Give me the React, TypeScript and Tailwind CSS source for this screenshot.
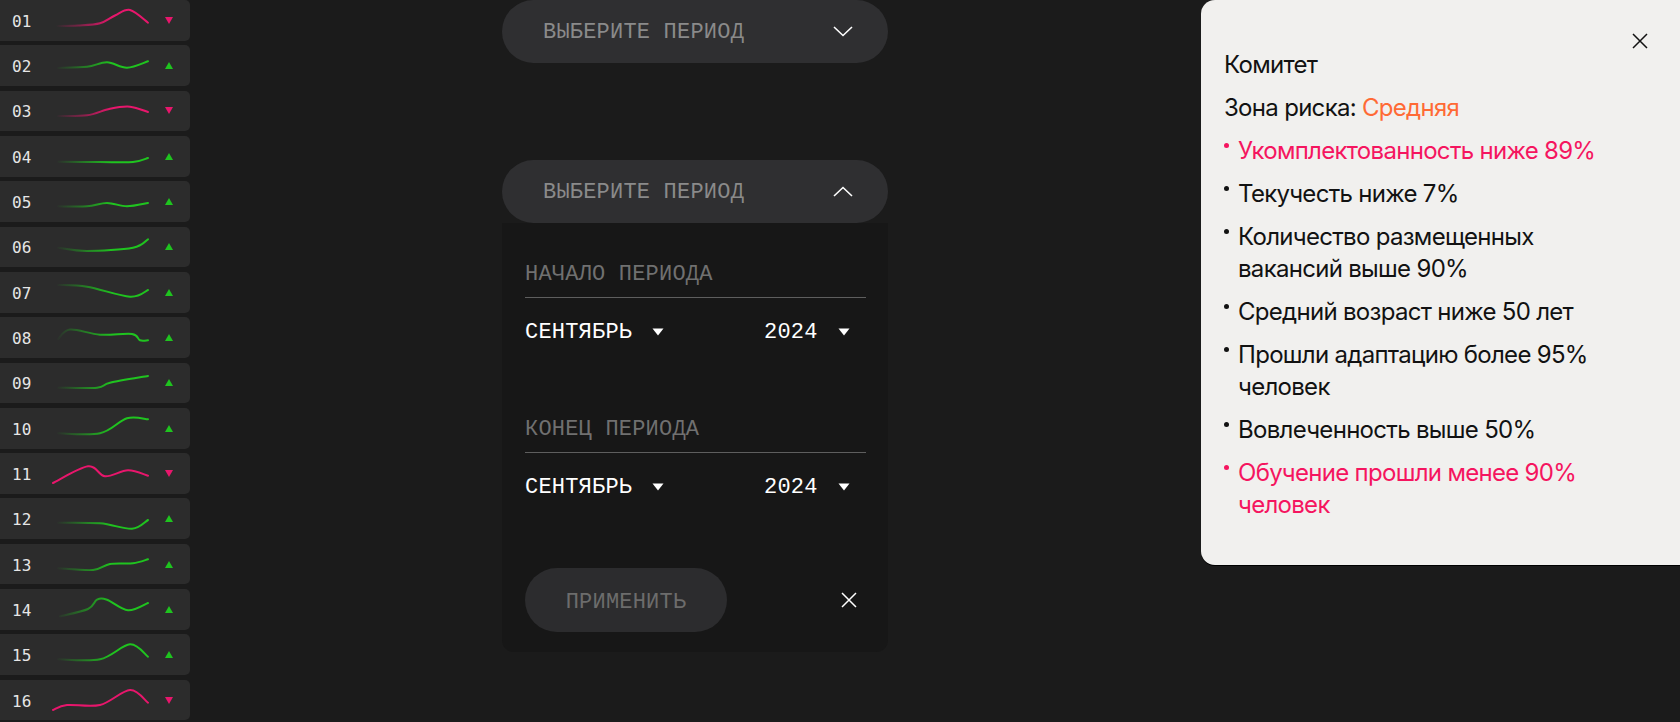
// Точки спарклайнов: x в координатах страницы, y внутри карточки
type Row = { id: string; up: boolean; fade: boolean; pts: [number, number][] };

const rows: Row[] = [
  { id: '01', up: false, fade: true, pts: [[55, 26], [78, 25.5], [100, 23.3], [115, 15.5], [130, 10], [148, 22.7]] },
  { id: '02', up: true, fade: true, pts: [[58, 23], [87, 21.8], [107, 17.3], [127, 22.7], [148, 16.3]] },
  { id: '03', up: false, fade: true, pts: [[58, 26], [87, 25.3], [110, 18.7], [130, 16.7], [148, 22]] },
  { id: '04', up: true, fade: true, pts: [[58, 25.7], [100, 26], [133, 26], [148, 22]] },
  { id: '05', up: true, fade: true, pts: [[58, 25.3], [87, 25.3], [107, 22], [127, 25.3], [148, 22]] },
  { id: '06', up: true, fade: true, pts: [[58, 21.7], [87, 25], [133, 21.7], [148, 13.3]] },
  { id: '07', up: true, fade: true, pts: [[58, 13], [87, 14.7], [130, 24.7], [148, 18]] },
  { id: '08', up: true, fade: true, pts: [[58, 22], [70, 12.5], [100, 17.7], [132, 17], [140, 23.3], [148, 23.3]] },
  { id: '09', up: true, fade: true, pts: [[58, 25.7], [97, 25.7], [110, 20.7], [148, 14]] },
  { id: '10', up: true, fade: true, pts: [[58, 25.3], [100, 25.3], [127, 10.3], [148, 11.3]] },
  { id: '11', up: false, fade: false, pts: [[53, 30], [88, 13.3], [105, 23.3], [128, 17.3], [148, 22.7]] },
  { id: '12', up: true, fade: true, pts: [[58, 24.7], [100, 25.3], [132, 30.7], [148, 22]] },
  { id: '13', up: true, fade: true, pts: [[58, 24.3], [93, 26], [110, 20], [133, 19.3], [148, 15.3]] },
  { id: '14', up: true, fade: true, pts: [[60, 27.3], [88, 20], [97, 10.7], [107, 10.7], [128, 21.3], [148, 14]] },
  { id: '15', up: true, fade: true, pts: [[58, 25.3], [100, 25.3], [130, 10.3], [148, 22.7]] },
  { id: '16', up: false, fade: false, pts: [[53, 30], [67, 25], [100, 25], [130, 10], [148, 22.7]] },
];

const risks = [
  { text: 'Укомплектованность ниже 89%', bad: true },
  { text: 'Текучесть ниже 7%', bad: false },
  { text: 'Количество размещенных вакансий выше 90%', bad: false },
  { text: 'Средний возраст ниже 50 лет', bad: false },
  { text: 'Прошли адаптацию более 95% человек', bad: false },
  { text: 'Вовлеченность выше 50%', bad: false },
  { text: 'Обучение прошли менее 90% человек', bad: true },
];

// сглаженная линия через точки (catmull-rom -> bezier)
function smooth(pts: [number, number][]) {
  let d = `M${pts[0][0]},${pts[0][1]}`;
  for (let i = 0; i < pts.length - 1; i++) {
    const p0 = pts[i - 1] || pts[i];
    const p1 = pts[i];
    const p2 = pts[i + 1];
    const p3 = pts[i + 2] || p2;
    const c1x = p1[0] + (p2[0] - p0[0]) / 6;
    const c1y = p1[1] + (p2[1] - p0[1]) / 6;
    const c2x = p2[0] - (p3[0] - p1[0]) / 6;
    const c2y = p2[1] - (p3[1] - p1[1]) / 6;
    d += ` C${c1x},${c1y} ${c2x},${c2y} ${p2[0]},${p2[1]}`;
  }
  return d;
}

const mono = "font-['Liberation_Mono',monospace]";

const Sparkline = ({ row }: { row: Row }) => {
  const color = row.up ? '#1fc41f' : '#e8166c';
  const grad = `fade-${row.id}`;
  return (
    <svg width="100" height="41" viewBox="52 0 100 41" className="shrink-0">
      <defs>
        <linearGradient id={grad} gradientUnits="userSpaceOnUse" x1="56" y1="0" x2="112" y2="0">
          <stop offset="0" stopColor={color} stopOpacity="0" />
          <stop offset="1" stopColor={color} stopOpacity="1" />
        </linearGradient>
      </defs>
      <path
        d={smooth(row.pts)}
        fill="none"
        stroke={row.fade ? `url(#${grad})` : color}
        strokeWidth="2"
        strokeLinecap="round"
      />
    </svg>
  );
};

const Caret = ({ className = '' }: { className?: string }) => (
  <svg width="12" height="8" viewBox="0 0 12 8" className={className}>
    <path d="M0.5 0.5 H11.5 L6 7.5 Z" fill="#ffffff" />
  </svg>
);

const Chevron = ({ up }: { up?: boolean }) => (
  <svg width="20" height="11" viewBox="0 0 20 11">
    <polyline
      points={up ? '1,10 10,1.5 19,10' : '1,1 10,9.5 19,1'}
      fill="none"
      stroke="#ffffff"
      strokeWidth="1.6"
    />
  </svg>
);

const Cross = ({ color, className = '' }: { color: string; className?: string }) => (
  <svg width="16" height="16" viewBox="0 0 16 16" className={className}>
    <path d="M1 1 L15 15 M15 1 L1 15" stroke={color} strokeWidth="1.5" fill="none" />
  </svg>
);

const PeriodPill = ({ up }: { up?: boolean }) => (
  <div className="flex h-[63px] items-center justify-between rounded-full bg-[#2f2f31] pl-[41px] pr-[35px]">
    <span className={`${mono} pt-[3px] text-[22px] leading-[24px] tracking-[0.2px] text-[#8a8a8a]`}>ВЫБЕРИТЕ ПЕРИОД</span>
    <Chevron up={up} />
  </div>
);

const DateRow = () => (
  <div className={`${mono} mt-[22px] flex h-[24px] items-center text-[22px] leading-[24px] tracking-[0.2px] text-white`}>
    <div className="flex w-[239px] items-center">
      <span className="pt-[2px]">СЕНТЯБРЬ</span>
      <Caret className="ml-[20px]" />
    </div>
    <span className="pt-[2px]">2024</span>
    <Caret className="ml-[20px]" />
  </div>
);

export default function App() {
  return (
    <div className="flex h-[722px] w-[1680px] overflow-hidden bg-[#1b1b1b]">
      {/* список показателей */}
      <div className="flex w-[190px] shrink-0 flex-col gap-[4.6px]">
        {rows.map((row) => (
          <div key={row.id} className="flex h-[40.73px] shrink-0 items-center rounded-r-[5px] bg-[#2c2c2c] pl-[12px]">
            <span className="w-[40px] pt-[3px] font-['DejaVu_Sans_Mono',monospace] text-[16px] text-[#e6e6e6]">{row.id}</span>
            <Sparkline row={row} />
            <svg width="8" height="7" viewBox="0 0 8 7" className="ml-[13px]">
              {row.up ? <path d="M4 0 L8 7 H0 Z" fill="#1fc41f" /> : <path d="M0 0 H8 L4 7 Z" fill="#e8166c" />}
            </svg>
          </div>
        ))}
      </div>

      {/* выбор периода */}
      <div className="ml-[312px] flex w-[386px] shrink-0 flex-col">
        <PeriodPill />
        <div className="mt-[97px]">
          <PeriodPill up />
        </div>
        <div className="rounded-b-[12px] bg-[#171717] pb-[20px] pl-[23px] pr-[22px] pt-[38px]">
          <div className={`${mono} h-[24px] text-[22px] leading-[28px] tracking-[0.2px] text-[#707070]`}>НАЧАЛО ПЕРИОДА</div>
          <div className="mt-[12px] h-px bg-[#5e5e5e]" />
          <DateRow />
          <div className={`${mono} mt-[72px] h-[24px] text-[22px] leading-[28px] tracking-[0.2px] text-[#707070]`}>КОНЕЦ ПЕРИОДА</div>
          <div className="mt-[12px] h-px bg-[#5e5e5e]" />
          <DateRow />
          <div className="mt-[69px] flex items-center justify-between">
            <button className={`${mono} h-[64px] w-[202px] rounded-full bg-[#2c2c2e] pt-[5px] text-[22px] tracking-[0.2px] text-[#6c6c6c]`}>
              ПРИМЕНИТЬ
            </button>
            <Cross color="#ffffff" className="mr-[9px]" />
          </div>
        </div>
      </div>

      {/* карточка комитета */}
      <div className="relative ml-auto w-[479px] shrink-0 self-start rounded-l-[14px] bg-[#f1f0ee] pb-[44px] pl-[23px] pt-[49px] font-['Inter',sans-serif] text-[24px] leading-[32px] tracking-[-0.7px] text-[#121212] shadow-[0_1px_0_#000]">
        <Cross color="#121212" className="absolute right-[32px] top-[33px]" />
        <div className="flex flex-col gap-[11px]">
          <div>Комитет</div>
          <div>
            Зона риска: <span className="text-[#ff6a35]">Средняя</span>
          </div>
          {risks.map((r) => (
            <div key={r.text} className={`flex ${r.bad ? 'text-[#f5155f]' : ''}`}>
              <div className="w-[14px] shrink-0">
                <div className={`mt-[8px] h-[5px] w-[5px] rounded-full ${r.bad ? 'bg-[#f5155f]' : 'bg-[#121212]'}`} />
              </div>
              <div className="w-[400px]">{r.text}</div>
            </div>
          ))}
        </div>
      </div>
    </div>
  );
}
